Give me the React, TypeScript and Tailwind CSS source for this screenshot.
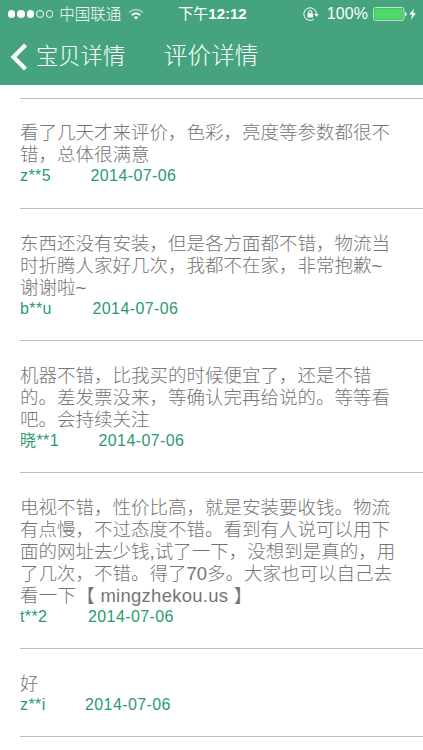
type Review = {
  lines: string[];
  user: string;
  date: string;
  // each user name is followed by a slightly different gap
  nameWidth: string;
};

const REVIEWS: Review[] = [
  {
    lines: ["看了几天才来评价，色彩，亮度等参数都很不", "错，总体很满意"],
    user: "z**5",
    date: "2014-07-06",
    nameWidth: "w-[70.5px]",
  },
  {
    lines: ["东西还没有安装，但是各方面都不错，物流当", "时折腾人家好几次，我都不在家，非常抱歉~", "谢谢啦~"],
    user: "b**u",
    date: "2014-07-06",
    nameWidth: "w-[72.5px]",
  },
  {
    lines: ["机器不错，比我买的时候便宜了，还是不错", "的。差发票没来，等确认完再给说的。等等看", "吧。会持续关注"],
    user: "晓**1",
    date: "2014-07-06",
    nameWidth: "w-[78.5px]",
  },
  {
    lines: [
      "电视不错，性价比高，就是安装要收钱。物流",
      "有点慢，不过态度不错。看到有人说可以用下",
      "面的网址去少钱,试了一下，没想到是真的，用",
      "了几次，不错。得了70多。大家也可以自己去",
      "看一下【 mingzhekou.us 】",
    ],
    user: "t**2",
    date: "2014-07-06",
    nameWidth: "w-[68px]",
  },
  {
    lines: ["好"],
    user: "z**i",
    date: "2014-07-06",
    nameWidth: "w-[65px]",
  },
];

function StatusBar() {
  return (
    <div className="grid h-7 grid-cols-[1fr_auto_1fr] items-center pr-1.5 pl-2 text-[15.5px]">
      <div className="flex items-center gap-[6px]">
        <div className="flex gap-[2.2px]">
          <span className="size-[7.3px] rounded-full bg-white" />
          <span className="size-[7.3px] rounded-full bg-white" />
          <span className="size-[7.3px] rounded-full bg-white" />
          <span className="size-[7.3px] rounded-full border border-white" />
          <span className="size-[7.3px] rounded-full border border-white" />
        </div>
        <span className="-mt-0.5 font-['Noto_Sans_CJK_SC',sans-serif] leading-5 font-light whitespace-nowrap">中国联通</span>
        <svg className="ml-[1px] shrink-0" width="16" height="12" viewBox="0 0 16 12" fill="none" stroke="currentColor" strokeWidth="1.6">
          <path d="M1 4.5a10 10 0 0 1 14 0" opacity=".5" />
          <path d="M3.6 7.2a6.2 6.2 0 0 1 8.800 0" />
          <path d="M8 11.600 5.800 9.300a3.100 3.100 0 0 1 4.400 0z" fill="currentColor" stroke="none" />
        </svg>
      </div>
      <span className="text-[15px] whitespace-nowrap">
        下午<span className="font-bold">12:12</span>
      </span>
      <div className="flex items-center justify-end">
        <svg width="16" height="14" viewBox="0 0 16 14" fill="none" stroke="currentColor">
          <path d="M13.4 7.5A6.3 6.3 0 1 0 10.5 12.4" />
          <path d="M11 7h4.8L13.4 9.8z" fill="currentColor" stroke="none" />
          <rect x="4.5" y="6.3" width="5.5" height="4.2" fill="currentColor" stroke="none" />
          <path d="M5.7 6.5V5a1.55 1.55 0 0 1 3.1 0v1.5" />
        </svg>
        <span className="mr-[5px] ml-[8px] text-[16px] tracking-[0.1px]">100%</span>
        <Battery />
      </div>
    </div>
  );
}

function Battery() {
  return (
    <svg width="44" height="14" viewBox="0 0 44 14" className="shrink-0">
      <rect x=".5" y=".5" width="30.5" height="13" rx="2" fill="none" stroke="#b9e2cf" />
      <rect x="1.5" y="1.5" width="28.5" height="11" rx="1.2" fill="#4cd964" />
      <path d="M32 5v4.5c1.2-.4 1.7-1.2 1.7-2.2S33.2 5.3 32 5z" fill="#fff" />
      <path d="M41 1.5 36.5 7.5h2.6L38 12.5 43 6.2h-2.9z" fill="#fff" />
    </svg>
  );
}

function NavBar() {
  return (
    <div className="flex h-[57px] items-center pl-[10px] font-['Noto_Sans_CJK_SC',sans-serif] leading-8 font-light">
      <svg width="18" height="28" viewBox="0 0 18 28" fill="none" stroke="currentColor" strokeWidth="4.2">
        <path d="M15.5 2 3.5 14l12 12" />
      </svg>
      <span className="mb-1.5 ml-2 w-[128px] text-[22.3px]">宝贝详情</span>
      <h1 className="mb-1.5 text-[23.6px] font-light">评价详情</h1>
    </div>
  );
}

function ReviewItem({ review }: { review: Review }) {
  return (
    <li className="ml-5 border-t border-[#bfbfbf] pt-6 pb-[21px] first:pt-[23px] first:pb-[22px]">
      <div className="text-[18.5px] leading-[22px] font-light whitespace-nowrap text-[#757575]">
        {review.lines.map((line) => (
          <p key={line} className={line.includes("mingzhekou") ? "tracking-[0.26px]" : undefined}>
            {line}
          </p>
        ))}
      </div>
      <div className="flex h-[20px] items-center text-[16px] tracking-[0.4px] text-[#2b9a70]">
        <span className={review.nameWidth}>{review.user}</span>
        <span>{review.date}</span>
      </div>
    </li>
  );
}

export default function App() {
  return (
    <div className="flex h-[750px] w-[423px] flex-col overflow-hidden bg-white font-['Liberation_Sans','Noto_Sans_CJK_SC',sans-serif]">
      <header className="h-[85px] shrink-0 bg-[#45a47d] text-white">
        <StatusBar />
        <NavBar />
      </header>
      <ul className="pt-[13px]">
        {REVIEWS.map((review) => (
          <ReviewItem key={review.user} review={review} />
        ))}
        <li className="ml-5 border-t border-[#bfbfbf]" />
      </ul>
    </div>
  );
}
